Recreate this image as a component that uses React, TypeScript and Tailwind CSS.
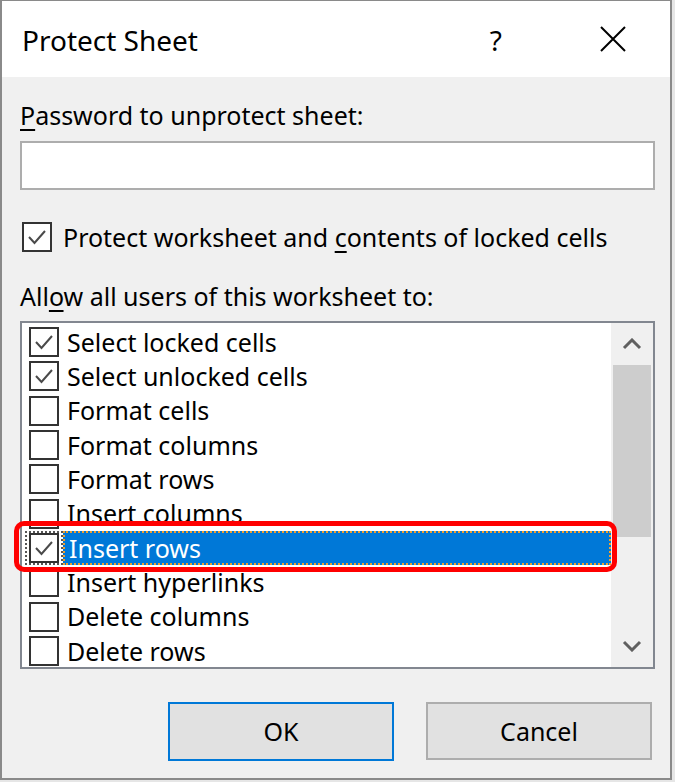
import React from "react";

const rows: { label: string; checked: boolean; selected?: boolean }[] = [
  { label: "Select locked cells", checked: true },
  { label: "Select unlocked cells", checked: true },
  { label: "Format cells", checked: false },
  { label: "Format columns", checked: false },
  { label: "Format rows", checked: false },
  { label: "Insert columns", checked: false },
  { label: "Insert rows", checked: true, selected: true },
  { label: "Insert hyperlinks", checked: false },
  { label: "Delete columns", checked: false },
  { label: "Delete rows", checked: false },
];

function Check() {
  return (
    <svg width="22" height="22" viewBox="0 0 22 22">
      <polyline points="3,11 8.5,17 19,5" fill="none" stroke="#4a4a4a" strokeWidth="2" />
    </svg>
  );
}

function Box({ checked }: { checked: boolean }) {
  return (
    <div className="w-[30px] h-[30px] border-2 border-[#333333] bg-white flex items-center justify-center shrink-0">
      {checked ? <Check /> : null}
    </div>
  );
}

export default function App() {
  return (
    <div
      className="w-[675px] h-[782px] bg-[#e6e6e6] text-[#000] overflow-hidden"
      style={{ fontFamily: '"Noto Sans", "Open Sans", sans-serif' }}
    >
      <div className="w-[672px] h-[780px] border-l-2 border-r-2 border-b-2 border-t border-[#8a8a8a] bg-[#f0f0f0] flex flex-col">
        {/* Title bar */}
        <div className="h-[76px] bg-white flex items-center pl-[20px] pr-[44px] shrink-0">
          <div className="text-[28px] leading-none pt-[2px]">Protect Sheet</div>
          <div className="ml-auto text-[28px] leading-none mr-[98px] pt-[2px]">?</div>
          <svg width="26" height="26" viewBox="0 0 26 26">
            <path d="M1 1 L25 25 M25 1 L1 25" stroke="#000" strokeWidth="2" />
          </svg>
        </div>

        <div className="px-[18px] flex flex-col text-[25px] leading-none">
          <div className="mt-[26px]">
            <span className="underline underline-offset-[4px] decoration-[2px]">P</span>assword to unprotect sheet:
          </div>
          <div className="mt-[13px] h-[49px] w-[635px] border-2 border-[#adadad] bg-white" />

          <div className="mt-[32px] flex items-center">
            <div className="ml-[2px]">
              <Box checked={true} />
            </div>
            <div className="ml-[11px]">
              Protect worksheet and <span className="underline underline-offset-[4px] decoration-[2px]">c</span>ontents of locked cells
            </div>
          </div>

          <div className="mt-[32px]">
            All<span className="underline underline-offset-[4px] decoration-[2px]">o</span>w all users of this worksheet to:
          </div>

          <div className="relative mt-[12px] w-[635px] h-[348px] border-2 border-[#828790] bg-white flex">
            <div className="flex-1 pt-[2px] overflow-hidden">
              {rows.map((r) => (
                <div key={r.label} className="h-[34.33px] flex items-center">
                  <div
                    className={
                      r.selected
                        ? "ml-[3px] h-[34px] w-[38px] border-2 border-dotted border-[#555] flex items-center justify-center"
                        : "ml-[5px] w-[34px] flex items-center justify-center"
                    }
                  >
                    <Box checked={r.checked} />
                  </div>
                  <div
                    className={
                      r.selected
                        ? "h-[34px] flex-1 bg-[#0078d7] text-white flex items-center pl-[4px] border-2 border-dotted border-[#f0a030]"
                        : "ml-[6px] flex-1"
                    }
                  >
                    {r.label}
                  </div>
                </div>
              ))}
            </div>
            {/* Scrollbar */}
            <div className="w-[42px] bg-[#f0f0f0] flex flex-col items-center shrink-0">
              <div className="h-[42px] w-full flex items-center justify-center">
                <svg width="20" height="12" viewBox="0 0 20 12">
                  <polyline points="2,10 10,2 18,10" fill="none" stroke="#606060" strokeWidth="3" />
                </svg>
              </div>
              <div className="w-[38px] h-[172px] bg-[#cdcdcd]" />
              <div className="flex-1" />
              <div className="h-[42px] w-full flex items-center justify-center">
                <svg width="20" height="12" viewBox="0 0 20 12">
                  <polyline points="2,2 10,10 18,2" fill="none" stroke="#606060" strokeWidth="3" />
                </svg>
              </div>
            </div>
            {/* Red annotation */}
            <div className="absolute left-[-8px] top-[198px] w-[603px] h-[51px] border-[5px] border-[#ff0000] rounded-[10px] pointer-events-none" />
          </div>

          <div className="mt-[33px] flex justify-end gap-[32px] pr-[0px]">
            <div className="w-[226px] h-[59px] border-2 border-[#0078d7] bg-[#e1e1e1] flex items-center justify-center">
              OK
            </div>
            <div className="w-[226px] h-[58px] border-2 border-[#adadad] bg-[#e1e1e1] flex items-center justify-center">
              Cancel
            </div>
          </div>
        </div>
      </div>
    </div>
  );
}
